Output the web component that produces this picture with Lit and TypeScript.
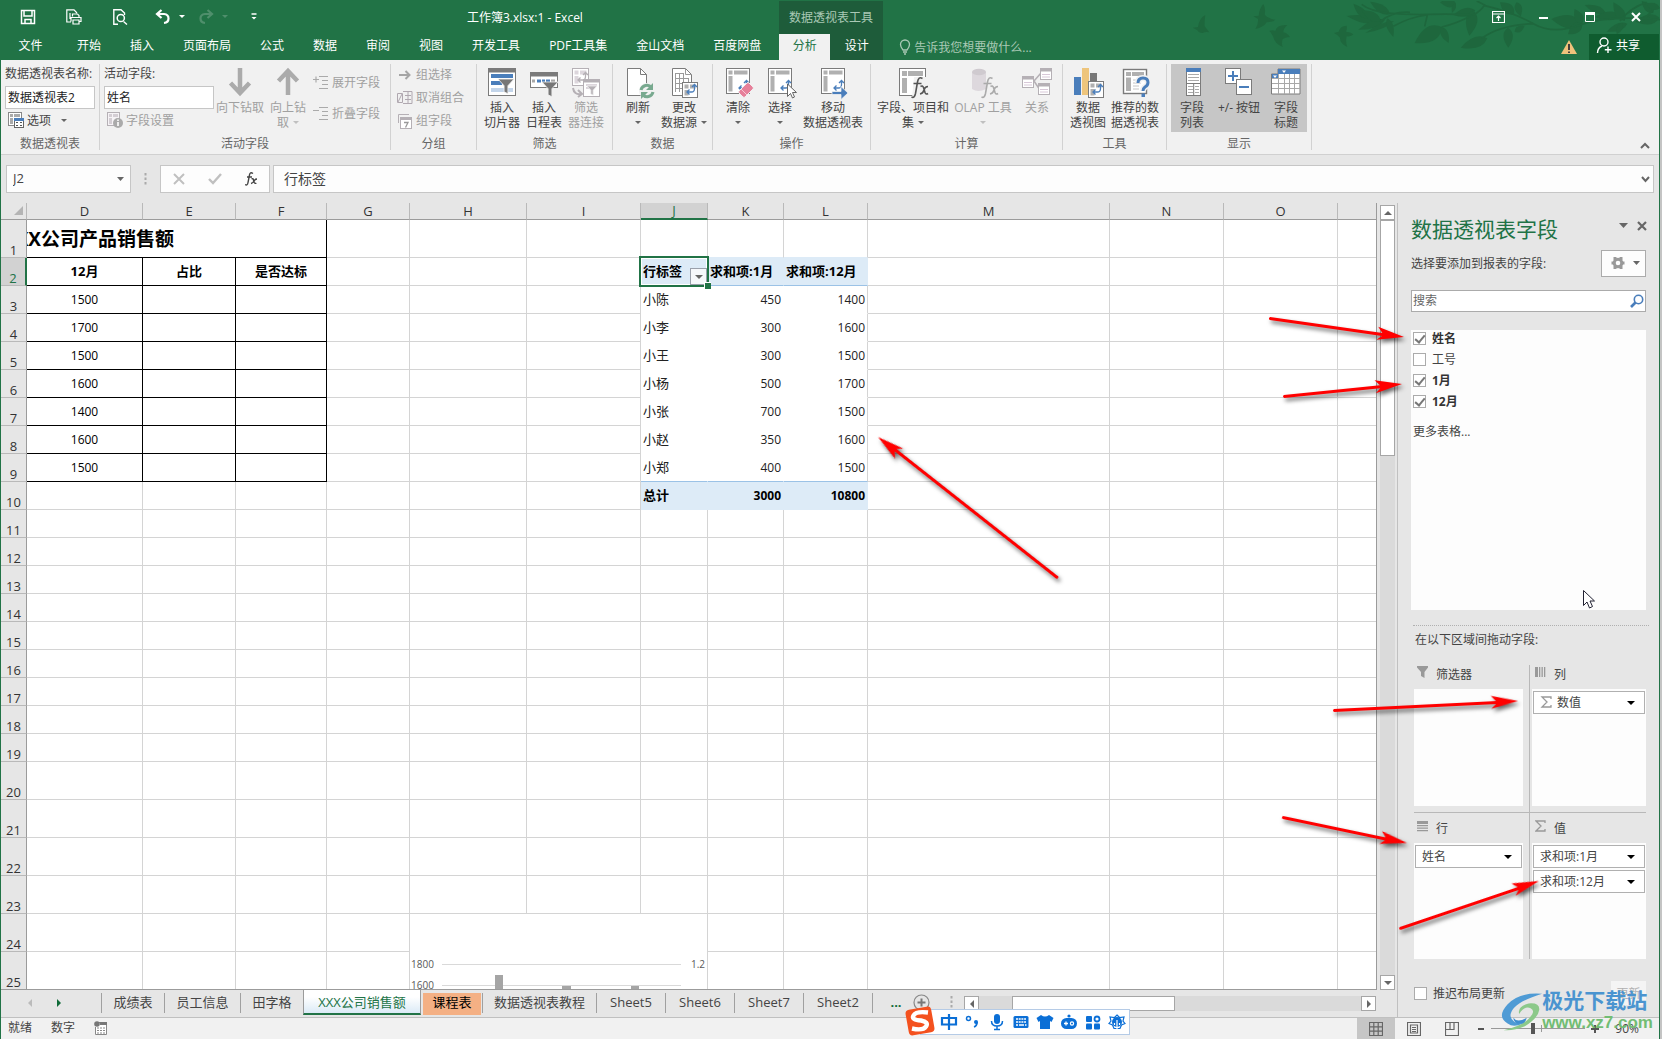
import { LitElement, html, svg, css, nothing } from "lit";
import { customElement } from "lit/decorators.js";
import { classMap } from "lit/directives/class-map.js";

const G = "#7b7b7b";
const B = "#4a7ebb";
const D = "#b5b0b5";

/* ---------- shared icon pieces ---------- */
const funnel = (x: number, y: number, s: number, c: string) =>
  svg`<path d="M${x} ${y}h${s}l${-s * 0.38} ${s * 0.42}v${s * 0.5}l${-s * 0.24} ${-s * 0.12}v${-s * 0.38}z" fill=${c} stroke="#f1f1f1" stroke-width=".8"/>`;

const pivot = (x: number, y: number, w: number, h: number, frame = G, block = "#b0b0b0", arrow = B) => svg`
  <rect x=${x + 0.5} y=${y + 0.5} width=${w - 1} height=${h - 1} fill="#fff" stroke=${frame}/>
  <path d="M${x + 2.5} ${y + 2.5}h4v4h-4zM${x + 8} ${y + 2.5}h${w - 10.5}v4h${10.5 - w}zM${x + 2.5} ${y + 8}h4v${h - 10.5}h-4z" fill=${block}/>
  <path d="M${x + w - 11} ${y + h - 6}h4.5q3 0 3-3.500v-4M${x + w - 8.500} ${y + h - 8.500}l-2.500 2.500 2.500 2.500M${x + w - 6} ${y + h - 11}l2.500-2.500 2.500 2.500" fill="none" stroke=${arrow} stroke-width="1.300"/>`;

const big: Record<string, unknown> = {
  down: svg`<path d="M15 0v24M5.500 15l9.500 10 9.500-10" fill="none" stroke="#ababab" stroke-width="4.500"/>`,
  up: svg`<path d="M15 27V3M5.500 13L15 3l9.500 10" fill="none" stroke="#ababab" stroke-width="4.500"/>`,
  slicer: svg`<rect x="1.500" y=".5" width="27" height="27" fill="#fff" stroke=${G}/><path d="M1 0h28v4.500H1z" fill=${G}/>
    <path d="M4 6h22v4H4zM4 13h11v4H4z" fill=${B}/><path d="M4 20h22v4H4z" fill="#c3d5ea"/>${funnel(11, 11, 16, "#777")}`,
  timeline: svg`<rect x="1.500" y="4.500" width="27" height="15" fill="#fff" stroke=${G}/><path d="M1 4h28v4.500H1z" fill=${G}/>
    <path d="M3 11.500h3v3H3zM22 11.500h4v3h-4z" fill="#a8a8a8"/><path d="M8 11.500h4v3H8zM13 11.500h3v3h-3zM17 11.500h4v3h-4z" fill=${B}/>${funnel(13, 14, 16, "#777")}`,
  conn: svg`${pivot(1, 0, 17, 18, D, "#dcd6dc", D)}<path d="M2 20q1 7 8 6M7 22l4 4-4 3" fill="none" stroke=${D} stroke-width="2"/>
    <rect x="12.500" y="11.500" width="16" height="17" fill="#fff" stroke=${D}/><path d="M12 11h17v3.500H12z" fill=${D}/><path d="M15 17h11M15 20h4" stroke="#dcd6dc" stroke-width="2"/>${funnel(16, 18, 10, D)}`,
  refresh: svg`<path d="M4.500.5h13l6 6v21h-19z" fill="#fff" stroke=${G}/><path d="M17.500.5v6h6" fill="none" stroke=${G}/>
    <circle cx="24" cy="23" r="8" fill="#f1f1f1"/><path d="M18 22a6 6 0 0 1 10.500-2.500M30 24a6 6 0 0 1-10.500 2.500" fill="none" stroke="#78a98f" stroke-width="3"/><path d="M30 15v7h-7zM18 31v-7h7z" fill="#78a98f"/>`,
  source: svg`<path d="M3.500.5h13l6 6v21h-19z" fill="#fff" stroke=${G}/><path d="M16.500.5v6h6M6 5.500h9M6 10.500h14M6 15.500h8M6 20.500h8M6.500 5v19M10.500 5v19M14.500 5v10M19.500 10v4" fill="none" stroke="#9a9a9a"/>${pivot(13, 14, 16, 16)}`,
  clear: svg`${pivot(3, 0, 24, 26)}<path d="M16 23l8-8q1-1 2 0l4 4q1 1 0 2l-8 8q-1 1-2 0l-4-4q-1-1 0-2z" fill="#e6809a" stroke="#f1f1f1"/><path d="M18 21l6 6" stroke="#f6c6d2"/>`,
  select: svg`${pivot(3, 0, 24, 26)}<path d="M22.500 16v12.500l3-3 2 4.500 2-1-2-4.500h4z" fill="#fff" stroke="#666"/>`,
  move: svg`${pivot(3, 0, 24, 26)}<path d="M14 23.500h9v-5l7 6.500-7 6.500v-5h-9z" fill=${B} stroke="#f1f1f1" stroke-width=".8"/>`,
  calc: svg`<rect x="1.500" y=".5" width="26" height="27" fill="#fff" stroke=${G}/><path d="M4 3h5v5H4zM10 3h15v5H10zM4 10h5v15H4z" fill="#b0b0b0"/>
    <path d="M16 9h14v21H14z" fill="#f1f1f1"/><path d="M24.500 10.500q-4-2.500-5 3.500l-2 11.500q-1 5-4 3.500M15.500 15.500h8M22.500 18.500q2-1.500 3 1l1.500 5q1 2.500 3 1M30 18.500q-3 0-4 3.500t-4 4" fill="none" stroke="#555" stroke-width="1.600"/>`,
  olap: svg`<path d="M4 4v17q6 4 14 0V4z" fill="#ddd8dd"/><ellipse cx="11" cy="4" rx="7" ry="3.200" fill="#cfcacf"/>
    <path d="M24.500 10.500q-4-2.500-5 3.500l-2 11.500q-1 5-4 3.500M15.500 15.500h8M22.500 18.500q2-1.500 3 1l1.500 5q1 2.500 3 1M30 18.500q-3 0-4 3.500t-4 4" fill="none" stroke="#aaa" stroke-width="1.600"/>`,
  relation: svg`<path d="M12 13l7-8M12 13l6 9" stroke=${D} stroke-width="1.500" fill="none"/>
    ${[[0, 8], [18, 0], [16, 15]].map(([x, y]) => svg`<rect x=${x + 0.5} y=${y + 0.5} width="11" height="11" fill="#fff" stroke=${D}/><path d="M${x} ${y}h12v3.500h-12z" fill=${D}/><path d="M${x + 2} ${y + 6.5}h8M${x + 2} ${y + 9}h8" stroke="#d8c8d8"/>`)}`,
  chart: svg`<path d="M1 9h7v18H1z" fill=${B}/><path d="M9 0h7v27H9z" fill="#eec57c"/><path d="M17 5h7v12h-7z" fill="#777"/>${pivot(15, 13, 16, 17)}`,
  recommend: svg`<rect x="3.500" y="1.500" width="23" height="24" fill="#fff" stroke=${G} stroke-width="1.400"/><path d="M6 4h5v4H6zM12 4h12v4H12zM6 9.500h5V23H6z" fill="#b0b0b0"/><path d="M13 12h10M13 15h8M13 18h6M13 21h6" stroke="#c4c4c4"/>
    <path d="M18 15q0-5 5-5t5 4.500q0 3-3 4.500-2 1.500-2 4" fill="none" stroke="#f1f1f1" stroke-width="6"/><path d="M18 15q0-5 5-5t5 4.500q0 3-3 4.500-2 1.500-2 4" fill="none" stroke=${B} stroke-width="3"/><path d="M21.500 25.500h3.500v3.500h-3.500z" fill=${B}/>`,
  list: svg`<rect x="9.500" y=".5" width="14" height="27" fill="#fff" stroke=${G}/><path d="M9 0h15v4H9z" fill=${B}/><path d="M11 6.500h11M11 9.500h11M11 12.500h11M11 18.500h5M11 21.500h5M11 24.500h5M18 18.500h4M18 21.500h4M18 24.500h4" stroke="#aaa"/><path d="M9 15.500h15M16.700 15v12" stroke=${G}/>`,
  plusminus: svg`<rect x="1.500" y=".5" width="15" height="15" fill="#fff" stroke=${G}/><path d="M9 3v10M4 8h10" stroke=${B} stroke-width="2"/><rect x="12.500" y="11.500" width="15" height="15" fill="#fff" stroke=${G}/><path d="M15 19h10" stroke=${B} stroke-width="2"/>`,
  headers: svg`<path d="M7 1h22v25H.5V6H7z" fill="#fff" stroke=${G}/><path d="M7 1h22v5H7zM1 6h6v4.500H1z" fill=${B}/><path d="M11 2.500h4l-2 2.500zM2 7.500h4L4 10z" fill="#fff"/><path d="M1 10.500h28M1 15.500h28M1 20.500h28M7.500 6v20M13.500 6v20M18.500 6v20M23.500 6v20" stroke="#a8a8a8"/>`,
};

const small: Record<string, unknown> = {
  options: svg`<rect x=".5" y=".5" width="13" height="13" fill="#fff" stroke="#888"/><path d="M2 2h3v3H2zM6 2h6v3H6zM2 6h3v6H2z" fill="#aaa"/><rect x="6.500" y="6.500" width="9" height="9" fill="#fff" stroke="#666"/><path d="M6 6h10v3H6z" fill=${B}/><path d="M8 10.500h2M12 10.500h2M8 13.500h2M12 13.500h2" stroke="#555" stroke-width="1.200"/>`,
  settings: svg`<rect x=".5" y=".5" width="12" height="13" fill="#f6f3f6" stroke=${D}/><path d="M2 2h3v3H2zM6 2h5v3H6zM2 6h3v6H2z" fill="#d4ced4"/><circle cx="11" cy="11" r="5" fill="#aaa"/><path d="M11 10v4M11 7.500v1.500" stroke="#fff" stroke-width="1.600"/>`,
  expand: svg`<path d="M0 4.500h6M3 1.500v6M6 1.500h9M9 5.500h6M9 9.500h6M6 13.500h9" stroke="#aaa" stroke-width="1.200"/>`,
  collapse: svg`<path d="M0 4.500h6M6 1.500h9M9 5.500h6M9 9.500h6M6 13.500h9" stroke="#aaa" stroke-width="1.200"/>`,
  group: svg`<path d="M2 8h10M8.500 4L12.500 8l-4 4" fill="none" stroke="#a5a5a5" stroke-width="2"/>`,
  ungroup: svg`<path d="M.5 3.500h5v9h-5zM1 12l4-8M6 1.500h9v12H6M8 5.500h6M8 9.500h6M11 2v11" fill="none" stroke="#b0a8b0"/>`,
  field: svg`<path d="M1.500 10V1.500H12" fill="none" stroke=${D}/><rect x="3.500" y="4.500" width="11" height="11" fill="#fff" stroke=${D}/><path d="M3 4h12v3H3z" fill=${D}/><path d="M7 9.500h4l-2.500 5" fill="none" stroke="#999" stroke-width="1.300"/>`,
};

type BigBtn = { icon: string; lines: string[]; caret?: boolean; off?: boolean; size?: string };

const bigButton = (b: BigBtn) => html`
  <button type="button" class=${classMap({ big: true, off: !!b.off, [b.size ?? "w42"]: true })}>
    <svg class="i30" viewBox="0 0 30 30">${big[b.icon]}</svg>
    ${b.lines.map((l, i) => html`<span class="ln">${l ? html`<span>${l}</span>` : nothing}${b.caret && i === b.lines.length - 1 ? html`<i class="caret"></i>` : nothing}</span>`)}
  </button>`;

const smallButton = (icon: string, label: string, off = true, caret = false) => html`
  <button type="button" class=${classMap({ sm: true, off })}><svg class="i16" viewBox="0 0 16 16">${small[icon]}</svg><span>${label}</span>${caret ? html`<i class="caret wide"></i>` : nothing}</button>`;

/* Header decoration: each leaf runs from its tip (x1, y1) to (x2, y2) with a given breadth. */
const LEAVES = [
  [500, 45, 590, 62, 22], [535, 86, 615, 56, 22], [556, 96, 642, 60, 14], [520, 8, 562, 52, 22], [570, 2, 630, 40, 24], [545, 28, 602, 60, 26],
  [640, 108, 622, 52, 20], [704, 126, 786, 78, 44], [806, 126, 784, 78, 22], [820, 42, 886, 28, 26], [868, 104, 880, 28, 34], [780, 4, 828, 8, 26],
  [816, 36, 826, 6, 12], [842, 140, 922, 112, 32], [985, 140, 984, 80, 28], [1034, 74, 1004, 92, 18], [1022, 46, 1010, 4, 22], [960, 4, 1002, 38, 30],
  [1114, 54, 1204, 68, 40], [1164, 100, 1206, 66, 30], [1184, 24, 1206, 68, 26], [1214, 12, 1278, 36, 22], [1244, 48, 1322, 42, 26], [1280, 92, 1342, 68, 22],
  [1310, 100, 1326, 66, 18], [1300, 4, 1334, 60, 28], [1385, 0, 1420, 36, 24], [1366, 62, 1438, 50, 30], [1396, 8, 1440, 22, 20],
];
const leaf = ([x1, y1, x2, y2, b]: number[]) => {
  const l = Math.hypot(x2 - x1, y2 - y1);
  const mx = (x1 + x2 * 2) / 3;
  const my = (y1 + y2 * 2) / 3;
  const nx = (-(y2 - y1) / l) * b;
  const ny = ((x2 - x1) / l) * b;
  return svg`<path d="M${x1} ${y1}Q${mx + nx} ${my + ny} ${x2} ${y2}Q${mx - nx} ${my - ny} ${x1} ${y1}z"/>`;
};

/* ---------- worksheet data ---------- */
const COLS = ["D", "E", "F", "G", "H", "I", "J", "K", "L", "M", "N", "O", ""];
const SALES = ["1500", "1700", "1500", "1600", "1400", "1600", "1500"];
const PIVOT = [
  ["小陈", "450", "1400"], ["小李", "300", "1600"], ["小王", "300", "1500"], ["小杨", "500", "1700"],
  ["小张", "700", "1500"], ["小赵", "350", "1600"], ["小郑", "400", "1500"],
];
const ARROWS = [
  [1270, 318, 1404, 337], [1284, 396, 1402, 384], [1057, 578, 878, 437],
  [1334, 710, 1518, 701], [1283, 817, 1407, 843], [1400, 928, 1539, 881],
];

const arrow = ([x1, y1, x2, y2]: number[]) => {
  const len = Math.hypot(x2 - x1, y2 - y1);
  const deg = (Math.atan2(y2 - y1, x2 - x1) * 180) / Math.PI;
  return svg`<path transform="translate(${x1} ${y1}) rotate(${deg})" d="M0-1H${len - 22}L${len - 27}-6.500L${len} 0L${len - 27} 6.500L${len - 22} 2H0Q-2 .5 0-1z"/>`;
};

@customElement("app-root")
export class AppRoot extends LitElement {
  static styles = css`
    :host { display: block; height: 100vh; min-height: 700px; overflow: hidden; position: relative;
      font: 12px/15px "Open Sans", "Noto Sans CJK SC", sans-serif; color: #444; background: #c4c4c4; }
    * { box-sizing: border-box; }
    button, input { font: inherit; color: inherit; margin: 0; padding: 0; border: 0; background: none; border-radius: 0; outline: none; }
    button { white-space: nowrap; }
    svg { display: block; flex: none; }
    .i16 { width: 16px; height: 16px; }
    .i30 { width: 30px; height: 30px; overflow: visible; margin-bottom: 2px; }
    .app { display: flex; flex-direction: column; height: 100%; margin-right: 2px; background: #e6e6e6; border-left: 1px solid #217346; border-right: 1px solid #217346; }

    .top { position: relative; background: #217346; color: #fff; flex: none; height: 60px; display: flex; flex-direction: column; }
    .deco { position: absolute; right: -1px; top: 1px; width: 480px; height: 60px; }
    .titlebar { display: flex; height: 34px; align-items: center; position: relative; }
    .qat { display: flex; align-items: center; width: 466px; padding-left: 17px; }
    .qat button { display: flex; align-items: center; justify-content: center; width: 46px; }
    .qat .first { width: 20px; margin-right: 13px; }
    .qat .undo { width: 30px; margin-left: 5px; }
    .qat .custom { width: 50px; }
    .title { flex: 1; }
    .ctx { position: absolute; left: 778px; top: 1px; width: 104px; height: 33px; line-height: 33px; background: #1e5c3a; color: #a9c9b5; text-align: center; }
    .win { display: flex; }
    .win button { width: 46px; height: 32px; display: flex; align-items: center; justify-content: center; }
    .tabs { display: flex; height: 26px; align-items: stretch; gap: 1px; position: relative; }
    .tabs button { padding: 0 14px 3px; }
    .tabs .file { width: 59px; padding: 0 0 3px; margin-right: 2px; }
    .tabs .pair { display: flex; margin-left: 3px; background: #1e5c3a; }
    .tabs .pair button { width: 53px; padding: 0 0 3px; }
    .tabs .pair .on { width: 51px; background: #f1f1f1; color: #217346; }
    .tabs .tell { display: flex; align-items: center; gap: 3px; padding: 0 0 0 15px; color: #a9c9b5; }
    .tabs .spacer { flex: 1; }
    .tabs .warn { padding: 0 10px 0 0; }
    .tabs .share { width: 70px; background: #0f5c2f; display: flex; align-items: center; gap: 4px; padding: 0 0 4px 7px; }

    .ribbon { flex: none; display: flex; height: 95px; background: #f1f1f1; border-bottom: 1px solid #d0d0d0; padding: 4px 0; }
    .grp { display: flex; flex-direction: column; border-right: 1px solid #d2d2d2; flex: none; }
    .body { display: flex; flex: none; height: 74px; padding-left: 4px; align-items: flex-start; }
    .cap { text-align: center; color: #666; line-height: 12px; }
    .g1 { width: 99px; } .g2 { width: 291px; } .g3 { width: 86px; } .g4 { width: 136px; } .g5 { width: 100px; }
    .g6 { width: 158px; } .g7 { width: 192px; } .g8 { width: 104px; } .g9 { width: 145px; }
    .form { display: flex; flex-direction: column; padding-top: 2px; }
    .form label { height: 20px; white-space: nowrap; }
    .form input { height: 23px; border: 1px solid #c6c6c6; background: #fff; color: #222; padding: 0 2px 2px; }
    .form .sm { margin-top: 2px; height: 18px; padding-left: 3px; }
    .f90 { width: 90px; } .f110 { width: 110px; margin-right: 2px; }
    .big { display: flex; flex-direction: column; align-items: center; padding-top: 4px; height: 68px; }
    .w42 { width: 42px; } .w44 { width: 44px; } .w48 { width: 48px; } .w50 { width: 50px; } .w52 { width: 52px; } .w64 { width: 64px; } .w76 { width: 76px; }
    .ln { display: flex; align-items: center; justify-content: center; min-height: 15px; gap: 4px; }
    .off { color: #a0a0a0; }
    .caret { display: inline-block; flex: none; border: 3px solid transparent; border-top: 3px solid currentColor; border-bottom: 0; color: #666; }
    .off .caret { color: #c0c0c0; }
    .caret.wide { margin-left: 7px; }
    .sm { display: flex; align-items: center; gap: 3px; height: 23px; }
    .rows31 { padding: 3px 0 0 1px; }
    .rows31 .sm { height: 31px; }
    .rows23 { padding-left: 2px; }
    .rows23 .sm { padding-bottom: 2px; }
    .on-set { display: flex; background: #c6c6c6; }
    .fold { margin-left: auto; align-self: flex-end; width: 28px; height: 8px; display: flex; justify-content: center; }

    .fbar { flex: none; display: flex; height: 48px; padding: 10px 5px 10px 5px; }
    .fbar > div { background: #fdfdfd; border: 1px solid #c6c6c6; display: flex; align-items: center; }
    .fbar .name { width: 125px; padding-right: 5px; }
    .fbar input { padding-bottom: 1px; }
    .fbar .name input { flex: 1; min-width: 0; padding-left: 6px; font-size: 13px; }
    .fbar .grip { width: 29px; background: none; border: 0; justify-content: center; }
    .fbar .btns { width: 110px; margin-right: 3px; }
    .fbar .btns button { flex: 1; display: flex; justify-content: center; }
    .fbar .value { flex: 1; padding-right: 3px; }
    .fbar .value input { flex: 1; padding-left: 10px; font-size: 14px; }

    .main { flex: 1; display: flex; min-height: 0; }
    .left { flex: 1; display: flex; flex-direction: column; min-width: 0; }
    .upper { flex: 1; display: flex; min-height: 0; }
    .sheet { flex: 1; min-width: 0; overflow: hidden; position: relative; border-bottom: 1px solid #9b9b9b; border-right: 1px solid #9b9b9b; background: #fff; }
    table { border-collapse: separate; border-spacing: 0; table-layout: fixed; width: 100%; }
    th, td { padding: 0; border-right: 1px solid #d4d4d4; border-bottom: 1px solid #d4d4d4; white-space: nowrap; color: #222; }
    th { background: #e6e6e6; font-weight: 400; color: #333; border-color: #b9b9b9; }
    td:last-child, thead th:last-child { border-right: 0; }
    thead th { height: 17px; line-height: 15px; font-size: 13px; border-bottom-color: #9b9b9b; }
    thead th.cur { background: #d2d2d2; color: #217346; border-bottom: 2px solid #217346; }
    tbody th { vertical-align: bottom; border-right-color: #9b9b9b; font-size: 13px; line-height: 13px; }
    tbody th.cur { background: #d2d2d2; color: #217346; border-right: 2px solid #217346; }
    .corner svg { margin-left: auto; }
    .c-rh { width: 26px; } .c-D { width: 116px; } .c-E { width: 93px; } .c-F { width: 91px; } .c-G { width: 83px; } .c-H { width: 117px; }
    .c-I, .c-N, .c-O { width: 114px; } .c-J { width: 67px; } .c-K { width: 76px; } .c-L { width: 84px; } .c-M { width: 242px; }
    .r38 { height: 38px; } .r28 { height: 28px; }
    .blk { border-color: #000; text-align: center; color: #000; }
    .hd { font-size: 13px; font-weight: 700; }
    .big-title { display: flex; justify-content: flex-end; width: 147px; overflow: hidden; font-size: 19px; line-height: 28px; font-weight: 700; }
    .pv { border-color: #fff; background: #fff; }
    .edge { border-right-color: #d4d4d4; }
    .fill { background: #ddebf7; border-color: #ddebf7; font-weight: 700; color: #000; }
    .above { border-bottom-color: #ddebf7; }
    .blue { border-bottom-color: #9bc2e6; }
    .lab { padding-left: 2px; font-size: 13px; }
    .num { padding-right: 2px; text-align: right; }
    .active { position: relative; }
    .active::before { content: ""; position: absolute; inset: -2px; border: 2px solid #217346; box-shadow: inset 0 0 0 1px #fff; }
    .active::after { content: ""; position: absolute; right: -4px; bottom: -4px; width: 6px; height: 6px; background: #217346; border: 1px solid #fff; border-right: 0; border-bottom: 0; z-index: 1; }
    .drop { position: absolute; right: 0; bottom: 0; width: 17px; height: 17px; background: #f6f8fb; border: 1px solid #9aa0ab; display: flex; align-items: center; justify-content: center; }
    .drop .caret { border-width: 4px 4px 0; }
    .chart { position: absolute; left: 409px; top: 711px; width: 297px; height: 75px; background: #fff; }
    .chart text { font-size: 10px; fill: #595959; }

    .vs { flex: none; width: 21px; padding: 2px 2px 0 3px; display: flex; flex-direction: column; border-right: 1px solid #c0c0c0; }
    .vs .track { flex: 1; background: #dadada; width: 15px; }
    .vs .thumb { height: 236px; background: #fff; border: 1px solid #a6a6a6; }
    .sb { width: 15px; height: 15px; background: #fff; border: 1px solid #a6a6a6; display: flex; align-items: center; justify-content: center; flex: none; }
    .tri { border: 4px solid transparent; width: 0; height: 0; }
    .tri.u { border-bottom-color: #666; border-top: 0; } .tri.d { border-top-color: #666; border-bottom: 0; }
    .tri.l { border-right-color: #666; border-left: 0; } .tri.r { border-left-color: #666; border-right: 0; }
    .tri.pale { border-right-color: #bbb; } .tri.go { border-left-color: #0f6b38; }

    .sheets { flex: none; height: 27px; display: flex; align-items: flex-start; border-right: 1px solid #c0c0c0; padding-right: 21px; font-size: 13px; }
    .sheets .nav { width: 29px; height: 24px; display: flex; align-items: center; justify-content: center; }
    .navs { display: flex; width: 101px; padding-left: 14px; border-right: 1px solid #a0a0a0; height: 20px; margin-top: 3px; align-items: center; }
    .sheets .tab { height: 20px; margin-top: 3px; line-height: 14px; border-right: 1px solid #a0a0a0; text-align: center; padding: 0 0 3px; }
    .sheets .tab.wide { width: 115px; }
    .sheets .tab.s { width: 69px; }
    .sheets .tab.t2 { width: 76px; } .sheets .tab.t1 { width: 63px; } .sheets .tab.t3 { width: 62px; border-right: 0; }
    .sheets .tab.sel { width: 118px; height: 25px; margin-top: 0; color: #217346; background: linear-gradient(#fff 30%, #dbeaf6); border: 1px solid #9b9b9b; border-top: 0; border-bottom: 2px solid #217346; padding: 0; }
    .sheets .tab.org { width: 58px; background: #f4b084; color: #000; border: 0; margin: 3px 1px 0 2px; height: 22px; padding-bottom: 5px; }
    .sheets .tab.org + .tab { border-left: 1px solid #a0a0a0; }
    .dots { width: 46px; height: 24px; line-height: 20px; color: #0f6b38; font-weight: 700; text-align: center; }
    .more { width: 43px; height: 24px; display: flex; align-items: center; gap: 20px; margin-left: -6px; }
    .hs { flex: 1; display: flex; margin-top: 6px; height: 15px; padding-left: 8px; }
    .hs .track { flex: 1; background: #dadada; padding-left: 33px; }
    .hs .thumb { width: 163px; height: 15px; background: #fff; border: 1px solid #a6a6a6; }

    .pane { flex: none; width: 261px; display: flex; flex-direction: column; padding: 11px 13px 0 13px; }
    .ptitle { display: flex; align-items: center; height: 30px; margin-right: -5px; }
    .ptitle h2 { margin: 0; flex: 1; font-size: 21px; line-height: 30px; font-weight: 400; color: #217346; }
    .ptitle button { width: 18px; display: flex; justify-content: center; margin-bottom: 7px; }
    .psub { display: flex; align-items: center; justify-content: space-between; height: 28px; margin-top: 5px; }
    .gear { width: 45px; height: 27px; border: 1px solid #ababab; background: #fdfdfd; display: flex; align-items: center; justify-content: center; gap: 8px; padding-left: 4px; }
    .search { display: flex; align-items: center; height: 22px; border: 1px solid #ababab; background: #fff; margin-top: 13px; padding-right: 1px; }
    .search input { flex: 1; min-width: 0; padding: 0 0 1px 1px; }
    .search input::placeholder { color: #666; opacity: 1; }
    .fields { flex: 1; background: #fdfdfd; margin-top: 18px; padding-left: 2px; min-height: 0; }
    .chk { display: flex; align-items: center; height: 21px; gap: 6px; }
    .fields .chk:first-child { margin-top: -2px; }
    .chk b { color: #333; }
    input[type="checkbox"] { appearance: none; width: 13px; height: 13px; border: 1px solid #ababab; background: #fff; position: relative; flex: none; }
    input[type="checkbox"]:checked::after { content: ""; position: absolute; left: 3px; top: 0; width: 4px; height: 8px; border: solid #777; border-width: 0 2px 2px 0; transform: rotate(40deg); }
    .fields a { display: block; margin-top: 12px; color: #444; text-decoration: none; }
    .drag { margin: 15px -3px 0 2px; border-top: 1px dotted #b0b0b0; padding: 6px 2px 0; height: 40px; }
    .areas { display: grid; grid-template-columns: 116px 116px; height: 294px; grid-template-rows: 147px 147px; margin-left: 3px; }
    .area { padding-top: 1px; display: flex; flex-direction: column; }
    .area:nth-child(odd) { border-right: 1px solid #b8b8b8; padding-right: 6px; }
    .area:nth-child(even) { padding-left: 2px; }
    .area:nth-child(n+3) { border-top: 1px solid #b8b8b8; padding-top: 7px; }
    .area:nth-child(-n+2) { padding-bottom: 6px; }
    .area h3 { margin: 0; font-size: 12px; font-weight: 400; height: 23px; line-height: 18px; display: flex; gap: 7px; padding-left: 3px; align-items: flex-start; }
    .zone { flex: 1; background: #fdfdfd; padding: 2px 1px; display: flex; flex-direction: column; gap: 2px; }
    .zone button { height: 23px; border: 1px solid #b0b0b0; background: #fff; display: flex; align-items: center; justify-content: space-between; padding: 0 9px 0 6px; }
    .zone .caret { color: #000; border-width: 4px 4px 0; }
    .zone .in { display: flex; gap: 5px; }
    .defer { display: flex; align-items: center; justify-content: space-between; height: 58px; padding: 10px 0 0 3px; }
    .defer .upd { width: 35px; height: 24px; background: #f4f4f4; color: #b0b0b0; }

    .status { flex: none; height: 22px; display: flex; align-items: center; background: #f1f1f1; border-top: 1px solid #c0c0c0; padding-right: 20px; }
    .status .l { display: flex; align-items: center; gap: 19px; flex: 1; padding: 0 0 2px 7px; }
    .status .v { width: 38px; height: 21px; display: flex; align-items: center; justify-content: center; }
    .status .v.on { background: #c6c6c6; }
    .status .z { width: 20px; height: 21px; display: flex; align-items: center; justify-content: center; }
    .zoom { appearance: none; width: 94px; height: 11px; background: linear-gradient(#999, #999) 0 5px / 100% 1px no-repeat, linear-gradient(#999, #999) 50px 2px / 1px 7px no-repeat; }
    .zoom::-webkit-slider-thumb { appearance: none; width: 4px; height: 11px; background: #555; }
    .pct { width: 28px; text-align: right; margin-left: 6px; }

    .ime { position: absolute; left: 920px; bottom: 4px; width: 210px; height: 26px; background: #fff; border: 1px solid #b5cbe6; display: flex; align-items: center; padding-left: 16px; }
    .ime button { width: 24px; display: flex; justify-content: center; }
    .ime .logo { position: absolute; left: -17px; top: -5px; width: 32px; height: 32px; }
    .over { position: absolute; left: 0; top: 0; width: 100%; height: 100%; pointer-events: none; }
    .over .arrows { fill: #f00; filter: drop-shadow(2px 3px 2px rgba(0, 0, 0, 0.6)); }
    .mark { position: absolute; right: 9px; bottom: 6px; display: flex; align-items: flex-end; pointer-events: none; }
    .mark svg { width: 44px; height: 42px; margin-right: -2px; }
    .mark .a { font-size: 21px; line-height: 25px; font-weight: 700; color: #4a94d0; }
    .mark .b { font: 700 17px/20px "Liberation Sans", sans-serif; color: #72bd74; }
  `;

  private ribbonTop() {
    return html`<header class="top">
      <svg class="deco" viewBox="0 0 1440 180"><g fill="#1e673d">
        <path d="M38 80l16-2Q58 50 76 42Q73 62 74 76Q80 84 88 94Q76 92 68 96Q56 96 52 88Q46 84 38 80zM220 46l16-2Q238 22 250 9Q258 24 254 40Q260 52 286 56Q278 64 260 64Q250 80 226 84Q236 68 234 54zM268 90Q278 86 286 90Q290 70 322 72Q310 82 310 94Q322 96 330 108Q318 108 308 114Q304 128 308 138Q284 128 280 108Q276 98 268 90zM462 96l14-4Q480 74 500 74Q502 82 498 92Q512 92 520 100Q514 108 500 106Q496 124 502 138Q480 128 480 110Q474 102 462 96z"/>
        ${LEAVES.map(leaf)}
        <g fill="none" stroke="#1e673d" stroke-width="5"><path d="M545 10Q570 30 625 36T750 40 880 42Q900 32 914 12L890 0M600 62Q640 30 690 34M640 76Q690 48 740 42M742 42l-8 34M785 78Q830 68 870 46M914 14Q1000 34 1060 68T1200 72 1440 56M905 112Q960 72 1060 68M1320 60Q1350 20 1400 4M1390 56l30-30"/></g>
      </g></svg>
      <div class="titlebar">
        <div class="qat">
          <button type="button" class="first" aria-label="保存"><svg class="i16" viewBox="0 0 16 16"><path d="M1.500 1.500h13v13h-13zM4 2v5h8V2M5 14.500v-4h6v4" fill="none" stroke="#fff" stroke-width="1.500"/></svg></button>
          <button type="button" aria-label="快速打印"><svg class="i16" viewBox="0 0 16 16"><path d="M5 13H.8V.8H8L11 4M4 4v6M6.500 7.500V5h5l1.500 1.500v2M5 12.500v-4h10v4h-2M7 11h6v4H7z" fill="none" stroke="#fff" stroke-width="1.200"/></svg></button>
          <button type="button" aria-label="打印预览"><svg class="i16" viewBox="0 0 16 16"><path d="M6 15.300H1.800V.7H9L12.500 4v2M11.500 12.500l3.500 3" fill="none" stroke="#fff" stroke-width="1.400"/><circle cx="8.800" cy="9" r="3.600" fill="none" stroke="#fff" stroke-width="1.500"/></svg></button>
          <button type="button" class="undo" aria-label="撤消"><svg class="i16" viewBox="0 0 16 16"><path d="M6.500 1L2 5l4.500 4M2.500 5H9q4.500.5 4.500 4.500T9 14" fill="none" stroke="#fff" stroke-width="2.200"/></svg></button>
          <svg width="8" height="4"><path d="M1 0h6L4 3z" fill="#fff"/></svg>
          <button type="button" class="undo" aria-label="恢复"><svg class="i16" viewBox="0 0 16 16"><path d="M9.500 1L14 5 9.500 9M13.500 5H7Q2.500 5.500 2.500 9.500T7 14" fill="none" stroke="#4f8f6c" stroke-width="2.200"/></svg></button>
          <svg width="8" height="4"><path d="M1 0h6L4 3z" fill="#4f8f6c"/></svg>
          <button type="button" class="custom" aria-label="自定义快速访问工具栏"><svg width="8" height="8"><path d="M1.500 1h5" stroke="#fff" stroke-width="1.500"/><path d="M1.500 4h5L4 6.500z" fill="#fff"/></svg></button>
        </div>
        <div class="title">工作簿3.xlsx:1 - Excel</div>
        <div class="ctx">数据透视表工具</div>
        <div class="win">
          <button type="button" aria-label="功能区显示选项"><svg width="13" height="12"><path d="M.5.5h12v11H.5zM1 3h11M6.500 10V5M4.500 7l2-2 2 2" fill="none" stroke="#fff" stroke-width="1.200"/></svg></button>
          <button type="button" aria-label="最小化"><svg width="10" height="6"><path d="M0 3h9v2H0z" fill="#fff"/></svg></button>
          <button type="button" aria-label="最大化"><svg width="10" height="10"><path d="M.5.5h9v9h-9z" fill="none" stroke="#fff"/><path d="M0 0h10v3H0z" fill="#fff"/></svg></button>
          <button type="button" aria-label="关闭"><svg width="10" height="10"><path d="M1 1l8 8M9 1L1 9" stroke="#fff" stroke-width="2"/></svg></button>
        </div>
      </div>
      <nav class="tabs">
        <button type="button" class="file">文件</button>
        ${["开始", "插入", "页面布局", "公式", "数据", "审阅", "视图", "开发工具", "PDF工具集", "金山文档", "百度网盘"].map((t) => html`<button type="button">${t}</button>`)}
        <div class="pair"><button type="button" class="on">分析</button><button type="button">设计</button></div>
        <button type="button" class="tell"><svg width="12" height="16"><path d="M4 11Q1.500 8 1.500 5.500A4.300 4.300 0 0 1 10.500 5.500Q10.500 8 8 11zM4 13h4M5 15h2" fill="none" stroke="#a9c9b5" stroke-width="1.300"/></svg>告诉我您想要做什么...</button>
        <span class="spacer"></span>
        <button type="button" class="warn" aria-label="警告"><svg width="18" height="16"><path d="M9 1l8 14H1z" fill="#f0c27b"/><path d="M9 5v6M9 12.500v1.500" stroke="#333" stroke-width="1.800"/></svg></button>
        <button type="button" class="share"><svg class="i16" viewBox="0 0 16 16"><circle cx="8" cy="5" r="4" fill="none" stroke="#fff" stroke-width="1.400"/><path d="M1.500 16q0-5 4.500-7M12 9.500v6.500M8.800 12.800h6.700" fill="none" stroke="#fff" stroke-width="1.400"/></svg>共享</button>
      </nav>
    </header>`;
  }

  private group(cls: string, cap: string, body: unknown) {
    return html`<section class="grp ${cls}"><div class="body">${body}</div><div class="cap">${cap}</div></section>`;
  }

  private ribbon() {
    return html`<div class="ribbon">
      ${this.group("g1", "数据透视表", html`<div class="form f90"><label for="ptname">数据透视表名称:</label><input id="ptname" value="数据透视表2">${smallButton("options", "选项", false, true)}</div>`)}
      ${this.group("g2", "活动字段", html`<div class="form f110"><label for="afield">活动字段:</label><input id="afield" value="姓名">${smallButton("settings", "字段设置")}</div>
        ${bigButton({ icon: "down", lines: ["向下钻取"], off: true, size: "w48" })}${bigButton({ icon: "up", lines: ["向上钻", "取"], caret: true, off: true, size: "w48" })}
        <div class="rows31">${smallButton("expand", "展开字段")}${smallButton("collapse", "折叠字段")}</div>`)}
      ${this.group("g3", "分组", html`<div class="rows23">${smallButton("group", "组选择")}${smallButton("ungroup", "取消组合")}${smallButton("field", "组字段")}</div>`)}
      ${this.group("g4", "筛选", html`${bigButton({ icon: "slicer", lines: ["插入", "切片器"] })}${bigButton({ icon: "timeline", lines: ["插入", "日程表"] })}${bigButton({ icon: "conn", lines: ["筛选", "器连接"], off: true })}`)}
      ${this.group("g5", "数据", html`${bigButton({ icon: "refresh", lines: ["刷新", ""], caret: true })}${bigButton({ icon: "source", lines: ["更改", "数据源"], caret: true, size: "w50" })}`)}
      ${this.group("g6", "操作", html`${bigButton({ icon: "clear", lines: ["清除", ""], caret: true })}${bigButton({ icon: "select", lines: ["选择", ""], caret: true })}${bigButton({ icon: "move", lines: ["移动", "数据透视表"], size: "w64" })}`)}
      ${this.group("g7", "计算", html`${bigButton({ icon: "calc", lines: ["字段、项目和", "集"], caret: true, size: "w76" })}${bigButton({ icon: "olap", lines: ["OLAP 工具", ""], caret: true, off: true, size: "w64" })}${bigButton({ icon: "relation", lines: ["关系"], off: true, size: "w44" })}`)}
      ${this.group("g8", "工具", html`${bigButton({ icon: "chart", lines: ["数据", "透视图"] })}${bigButton({ icon: "recommend", lines: ["推荐的数", "据透视表"], size: "w52" })}`)}
      ${this.group("g9", "显示", html`<div class="on-set">${bigButton({ icon: "list", lines: ["字段", "列表"] })}${bigButton({ icon: "plusminus", lines: ["+/- 按钮"], size: "w52" })}${bigButton({ icon: "headers", lines: ["字段", "标题"] })}</div>`)}
      <button type="button" class="fold" aria-label="折叠功能区"><svg width="10" height="8"><path d="M1 6l4-4 4 4" fill="none" stroke="#666" stroke-width="2"/></svg></button>
    </div>
    <div class="fbar">
      <div class="name"><input aria-label="名称框" value="J2"><svg width="8" height="5"><path d="M0 0h7L3.500 4z" fill="#666"/></svg></div>
      <div class="grip"><svg width="3" height="12"><path d="M1.500 0v2.500M1.500 4.500V7M1.500 9v2.500" stroke="#aaa" stroke-width="2"/></svg></div>
      <div class="btns">
        <button type="button" aria-label="取消"><svg width="12" height="12"><path d="M1 1l10 10M11 1L1 11" stroke="#c0c0c0" stroke-width="2"/></svg></button>
        <button type="button" aria-label="输入"><svg width="14" height="12"><path d="M1 6l4 4 8-9" fill="none" stroke="#c0c0c0" stroke-width="2.400"/></svg></button>
        <button type="button" aria-label="插入函数"><svg width="13" height="14"><path d="M8 1.500Q5-.5 4.500 3L3 10.500Q2.500 14 0 12.500M2 5h5M6.500 7q1.500-1 2 1l.8 2.500q.7 1.500 2 .5M12 7Q10 7 9 9t-3 2.500" fill="none" stroke="#444" stroke-width="1.400"/></svg></button>
      </div>
      <div class="value"><input aria-label="编辑栏" value="行标签"><svg width="9" height="7"><path d="M1 1l3.500 4L8 1" fill="none" stroke="#666" stroke-width="2"/></svg></div>
    </div>`;
  }

  private cell(row: number, col: string) {
    const i = row - 3;
    if (row <= 9 && col && "DEF".includes(col)) {
      if (row === 2) return html`<td class="blk hd">${{ D: "12月", E: "占比", F: "是否达标" }[col]}</td>`;
      return html`<td class="blk">${col === "D" ? SALES[i] : nothing}</td>`;
    }
    if (col && "JKL".includes(col)) {
      const k = "JKL".indexOf(col);
      if (row === 1) return html`<td class="above"></td>`;
      if (row === 2) {
        return k === 0
          ? html`<td class="fill blue lab active">行标签<button type="button" class="drop" aria-label="筛选行标签"><i class="caret"></i></button></td>`
          : html`<td class="fill blue lab">${k === 1 ? "求和项:1月" : "求和项:12月"}</td>`;
      }
      if (row <= 9) return html`<td class=${classMap({ pv: true, edge: k === 2, blue: row === 9, lab: k === 0, num: k > 0 })}>${PIVOT[i][k]}</td>`;
      if (row === 10) return html`<td class=${classMap({ fill: true, lab: k === 0, num: k > 0 })}>${["总计", "3000", "10800"][k]}</td>`;
    }
    return html`<td></td>`;
  }

  private grid() {
    const rows = Array.from({ length: 25 }, (_, n) => n + 1);
    return html`<div class="sheet">
      <table>
        <colgroup><col class="c-rh">${COLS.map((c) => html`<col class=${c ? "c-" + c : "c-rest"}>`)}</colgroup>
        <thead><tr><th class="corner"><svg width="12" height="12"><path d="M9 1v9H0z" fill="#b4b4b4"/></svg></th>${COLS.map((c) => html`<th class=${c === "J" ? "cur" : ""}>${c}</th>`)}</tr></thead>
        <tbody>${rows.map((r) => html`<tr class=${r === 1 || r > 19 ? "r38" : "r28"}>
          <th class=${r === 2 ? "cur" : ""}>${r}</th>
          ${r === 1 ? html`<td class="blk" colspan="3"><div class="big-title">XX公司产品销售额</div></td>` : nothing}
          ${COLS.slice(r === 1 ? 3 : 0).map((c) => this.cell(r, c))}</tr>`)}
        </tbody>
      </table>
      <svg class="chart" viewBox="0 0 297 75">
        <path d="M32 50.500h239M32 71.500h239" stroke="#d9d9d9"/>
        <path d="M85 61h8v14h-8zM152 72h9v3h-9zM221 72h8v3h-8z" fill="#a5a5a5"/>
        <text x="1" y="54">1800</text><text x="1" y="75">1600</text><text x="281" y="54">1.2</text>
      </svg>
    </div>`;
  }

  private sheetTabs() {
    const tabs: [string, string][] = [["成绩表", "t1"], ["员工信息", "t2"], ["田字格", "t3"], ["XXX公司销售额", "sel"], ["课程表", "org"], ["数据透视表教程", "wide"], ["Sheet5", "s"], ["Sheet6", "s"], ["Sheet7", "s"], ["Sheet2", "s"]];
    return html`<div class="sheets">
      <div class="navs"><button type="button" class="nav" aria-label="上一个"><i class="tri l pale"></i></button><button type="button" class="nav" aria-label="下一个"><i class="tri r go"></i></button></div>
      ${tabs.map(([t, c]) => html`<button type="button" class="tab ${c}">${t}</button>`)}
      <button type="button" class="dots">...</button>
      <div class="more"><svg width="17" height="17"><circle cx="8.500" cy="8.500" r="7.500" fill="none" stroke="#888" stroke-width="1.200"/><path d="M8.500 4.500v8M4.500 8.500h8" stroke="#777" stroke-width="2"/></svg><svg width="3" height="12"><path d="M1.500 0v2.500M1.500 4.500V7M1.500 9v2.500" stroke="#aaa" stroke-width="2"/></svg></div>
      <div class="hs"><button type="button" class="sb" aria-label="向左滚动"><i class="tri l"></i></button><div class="track"><div class="thumb"></div></div><button type="button" class="sb" aria-label="向右滚动"><i class="tri r"></i></button></div>
    </div>`;
  }

  private pane() {
    const sigma = svg`<path d="M10 3V1H1l5 5-5 5h9V9" fill="none" stroke="#999" stroke-width="1.300"/>`;
    const areas: { t: string; i: unknown; f: { t: string; s?: boolean }[] }[] = [
      { t: "筛选器", i: svg`<path d="M0 0h11v1.500L7.500 6v6L4 10V6L0 1.500z" fill="#999"/>`, f: [] },
      { t: "列", i: svg`<path d="M0 1h3v10H0zM4 1h1.300v10H4zM6.500 1h1.300v10H6.500zM9 1h1.300v10H9z" fill="#999"/>`, f: [{ t: "数值", s: true }] },
      { t: "行", i: svg`<path d="M0 1h11v3H0zM0 5h11v1.200H0zM0 7.500h11v1.200H0zM0 10h11v1.200H0z" fill="#999"/>`, f: [{ t: "姓名" }] },
      { t: "值", i: sigma, f: [{ t: "求和项:1月" }, { t: "求和项:12月" }] },
    ];
    return html`<aside class="pane">
      <div class="ptitle"><h2>数据透视表字段</h2><button type="button" aria-label="任务窗格选项"><svg width="10" height="6"><path d="M0 0h9L4.500 5z" fill="#666"/></svg></button><button type="button" aria-label="关闭窗格"><svg width="10" height="10"><path d="M1 1l8 8M9 1L1 9" stroke="#666" stroke-width="2.200"/></svg></button></div>
      <div class="psub"><span>选择要添加到报表的字段:</span><button type="button" class="gear" aria-label="工具"><svg width="14" height="14"><circle cx="7" cy="7" r="3.800" fill="none" stroke="#999" stroke-width="3"/><path d="M4 1v3M10 1v3M4 10v3M10 10v3M.5 7H3M11 7h2.500" stroke="#999" stroke-width="3"/></svg><svg width="8" height="5"><path d="M0 0h7L3.500 4z" fill="#666"/></svg></button></div>
      <div class="search"><input type="search" placeholder="搜索" aria-label="搜索"><svg width="14" height="14"><circle cx="8.500" cy="5.500" r="4.200" fill="none" stroke=${B} stroke-width="1.600"/><path d="M5.500 8.500L1 13" stroke=${B} stroke-width="2.600"/></svg></div>
      <div class="fields">
        <label class="chk"><input type="checkbox" checked><b>姓名</b></label>
        <label class="chk"><input type="checkbox"><span>工号</span></label>
        <label class="chk"><input type="checkbox" checked><b>1月</b></label>
        <label class="chk"><input type="checkbox" checked><b>12月</b></label>
        <a href="#more">更多表格...</a>
      </div>
      <div class="drag">在以下区域间拖动字段:</div>
      <div class="areas">${areas.map((a) => html`<section class="area"><h3><svg width="12" height="13">${a.i}</svg>${a.t}</h3><div class="zone">${a.f.map((f) => html`<button type="button"><span class="in">${f.s ? html`<svg width="12" height="14"><g transform="translate(1 1)">${sigma}</g></svg>` : nothing}${f.t}</span><i class="caret"></i></button>`)}</div></section>`)}</div>
      <div class="defer"><label class="chk"><input type="checkbox"><span>推迟布局更新</span></label><button type="button" class="upd" disabled>更新</button></div>
    </aside>`;
  }

  private status() {
    return html`<footer class="status">
      <div class="l"><span>就绪</span><span>数字</span><svg width="13" height="14"><path d="M3 1.500h9.500v12H1.500V6" fill="#fff" stroke="#888"/><path d="M6 1h7v3H6z" fill="#777"/><circle cx="3" cy="3" r="2.800" fill="#777"/><path d="M3 7h2M6 7h2M9 7h2M3 9.500h2M6 9.500h2M9 9.500h2M3 12h2M6 12h2M9 12h2" stroke="#888"/></svg></div>
      <button type="button" class="v on" aria-label="普通"><svg width="14" height="14"><path d="M.5.500h13v13H.5zM.5 4.800h13M.5 9.200h13M4.800.5v13M9.200.5v13" fill="none" stroke="#666" stroke-width="1.200"/></svg></button>
      <button type="button" class="v" aria-label="页面布局"><svg width="14" height="14"><path d="M.5.500h13v13H.5zM3.500 3h7v8h-7zM5 5.500h4M5 7.500h4M5 9.500h4" fill="none" stroke="#666" stroke-width="1.200"/></svg></button>
      <button type="button" class="v" aria-label="分页预览"><svg width="14" height="14"><path d="M.5.500h13v13H.5zM5 .5v7h4v-7M0 7.500h9" fill="none" stroke="#666" stroke-width="1.200"/></svg></button>
      <button type="button" class="z" aria-label="缩小"><svg width="8" height="8"><path d="M1 4h6" stroke="#555" stroke-width="2"/></svg></button>
      <input class="zoom" type="range" min="10" max="190" value="90" aria-label="缩放">
      <button type="button" class="z" aria-label="放大"><svg width="8" height="8"><path d="M0 4h8M4 0v8" stroke="#555" stroke-width="2"/></svg></button>
      <span class="pct">90%</span>
    </footer>`;
  }

  private ime() {
    const c = "#0b6fd6";
    const icons = [
      svg`<path d="M2 5h14v6.500H2zM9 1v16" fill="none" stroke=${c} stroke-width="2.200"/>`,
      svg`<circle cx="4.500" cy="5.500" r="2" fill="none" stroke=${c} stroke-width="1.500"/><circle cx="12" cy="9" r="2" fill=${c}/><path d="M13 9q0 4-3 5" fill="none" stroke=${c} stroke-width="1.800"/>`,
      svg`<rect x="6" y="1" width="6" height="10" rx="3" fill=${c}/><path d="M3.500 8q0 5 5.500 5t5.500-5M9 13v3M6 16.500h6" fill="none" stroke=${c} stroke-width="1.500"/>`,
      svg`<rect x="1.500" y="3" width="15" height="12" rx="1.500" fill=${c}/><path d="M4 6h10M4 9h10" stroke="#fff" stroke-width="1.600" stroke-dasharray="2 .7"/><path d="M4 12h2M7 12h5M13 12h1.500" stroke="#fff" stroke-width="1.600"/>`,
      svg`<path d="M5 2q4 3 8 0l4.500 3-2 4-1.500-1v8H4V8L2.500 9l-2-4z" fill=${c}/>`,
      svg`<rect x="1" y="5" width="16" height="11" rx="5.500" fill=${c}/><circle cx="9" cy="3" r="1.600" fill=${c}/><path d="M4 10.500h4M6 8.500v4" stroke="#fff" stroke-width="1.300"/><circle cx="12" cy="10.500" r="1.600" fill="none" stroke="#fff" stroke-width="1.200"/>`,
      svg`<rect x="2" y="3" width="6" height="6" rx="1" fill=${c}/><circle cx="13" cy="6" r="2.500" fill="none" stroke=${c} stroke-width="1.800"/><rect x="2" y="10.500" width="6" height="6" rx="1" fill=${c}/><rect x="10" y="10.500" width="6" height="6" rx="1" fill=${c}/>`,
      svg`<path d="M9 2l2.500 2.500L16 4l-1 4 2 2.500-3.500 1.500L12 15.500H6L4.500 12 1 10.500 3 8 2 4l4.500.5z" fill="none" stroke=${c} stroke-width="1.200"/><circle cx="9" cy="9" r="5" fill=${c}/><path d="M9 7v9M6.500 10v2M11.500 10v2" stroke="#fff" stroke-width="1.200"/>`,
    ];
    return html`<div class="ime">
      <svg class="logo" viewBox="0 0 32 32"><rect x="3" y="3" width="26" height="26" rx="4" transform="rotate(-10 16 16)" fill="#f4511e"/><path d="M24 7.500Q12 6 9.500 10.500T17 15.500Q25 17 22 21.500T8 23.500" fill="none" stroke="#fff" stroke-width="4.400"/></svg>
      ${icons.map((i) => html`<button type="button" aria-label="输入法"><svg width="18" height="18">${i}</svg></button>`)}
    </div>`;
  }

  render() {
    return html`<div class="app">
        ${this.ribbonTop()}${this.ribbon()}
        <div class="main">
          <div class="left">
            <div class="upper">${this.grid()}<div class="vs"><button type="button" class="sb" aria-label="向上滚动"><i class="tri u"></i></button><div class="track"><div class="thumb"></div></div><button type="button" class="sb" aria-label="向下滚动"><i class="tri d"></i></button></div></div>
            ${this.sheetTabs()}
          </div>
          ${this.pane()}
        </div>
        ${this.status()}
      </div>
      ${this.ime()}
      <svg class="over"><g class="arrows">${ARROWS.map(arrow)}</g>
        <path d="M1583.500 590.500v15l3.500-3.500 2.500 6 3-1.500-2.500-5.500h4.500z" fill="#fff" stroke="#223"/></svg>
      <div class="mark">
        <svg viewBox="0 0 46 42"><path d="M44 2Q20 0 8 13T8 33Q14 38 24 33 12 33 11 25 11 12 44 2z" fill="#4f9bd5"/><path d="M20 23q-2-8 10-11 12-1 11 7T26 36Q14 41 4 40q18-4 26-12t2-11-12 6z" fill="#8cc98a"/><path d="M14 27q4 6 14 0-2 8-10 6-4-2-4-6z" fill="#3f8fd0"/></svg>
        <div><div class="a">极光下载站</div><div class="b">www.xz7.com</div></div>
      </div>`;
  }
}
